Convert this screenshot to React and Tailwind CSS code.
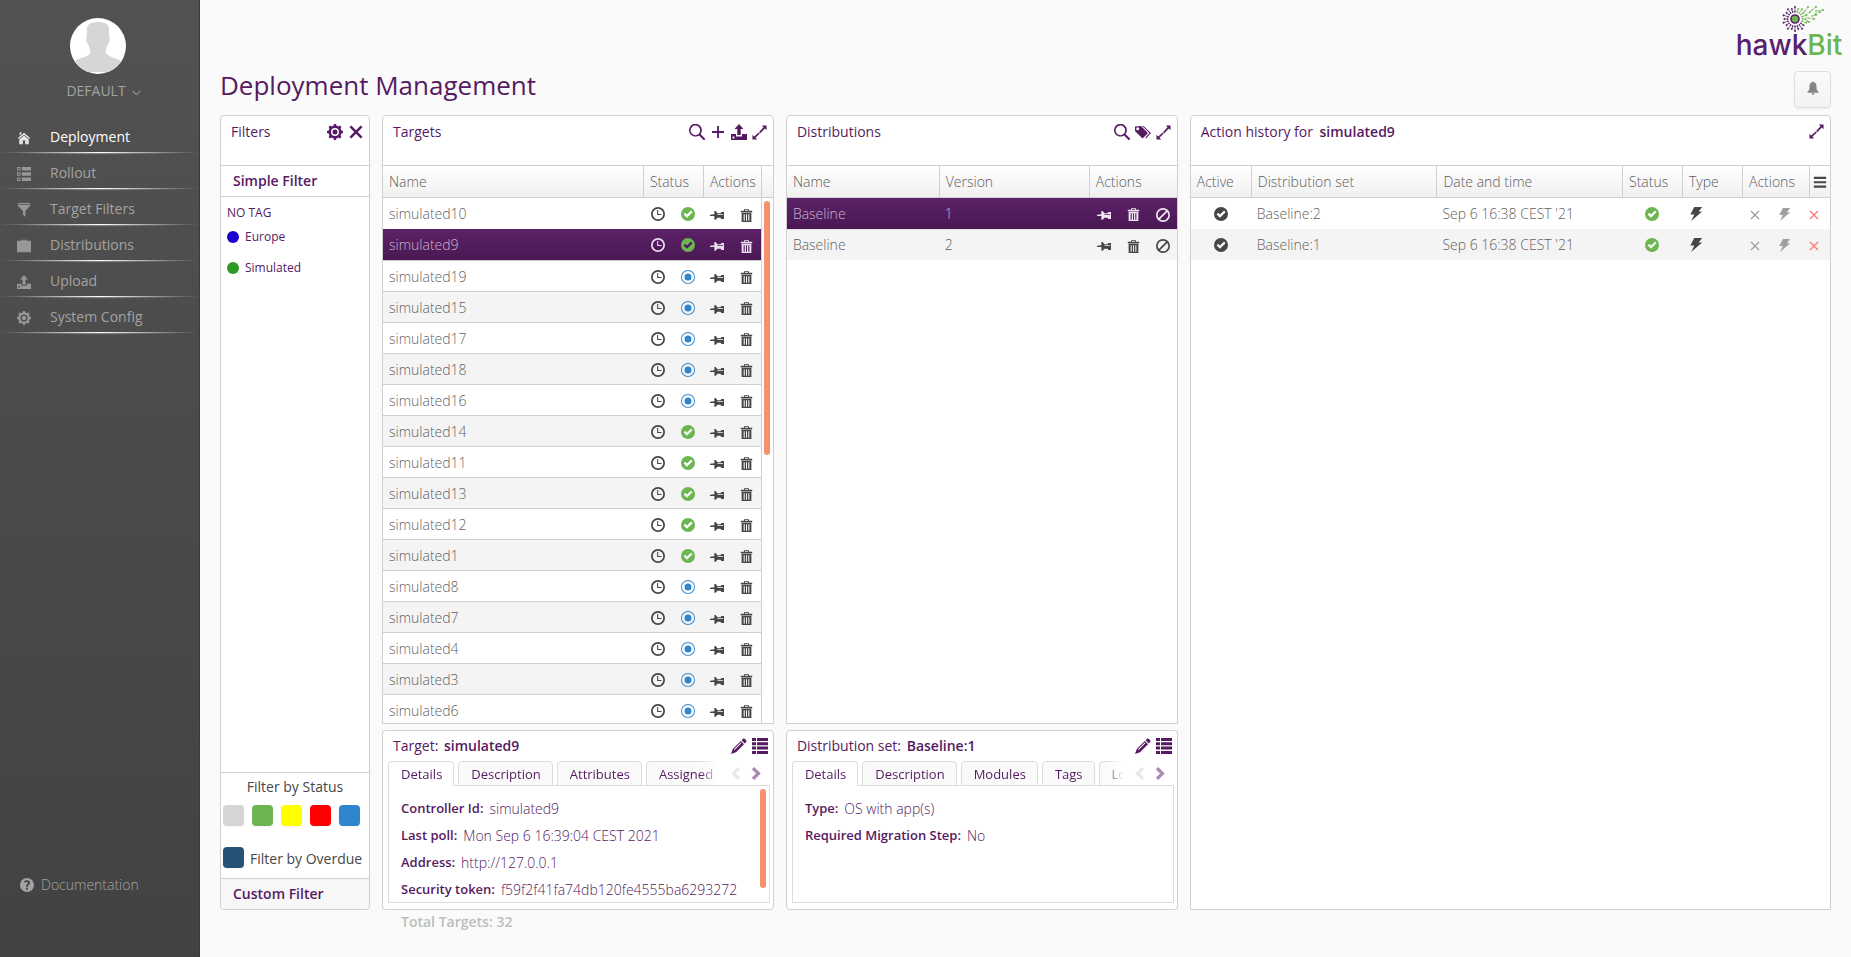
const SHAPES = {
  home: 'M8 2 1 8l1 1.2L8 4.2l6 5L15 8zM2.6 9.6V15h4v-4.2h2.8V15h4V9.6L8 5.2zM3 1.5h2v2L3 5.2z',
  tasks: 'M0 0h4v4H0zM1.2 1.2v1.6h1.6V1.2zM5.5 0H16v4H5.5zM0 6h4v4H0zM1.2 7.2v1.6h1.6V7.2zM5.5 6H16v4H5.5zM0 12h4v4H0zM1.2 13.2v1.6h1.6v-1.6zM5.5 12H16v4H5.5z',
  filter: 'M1 0h14v1.2H1zM1 2h14v1L9.6 9.2V16L6.8 13.2V9.2L1 3z',
  briefcase: 'M5 2V.8h6V2h5v13H0V2zM6 2h4v-.4H6z',
  upload: 'M8 0l4.5 5H9.7v6H6.3V5H3.5zM0 10h5v2.4h6V10h5v6H0zM1.6 12.6v1.8h1.8v-1.8z',
  cog: 'M16 9V7l-1.7-.6c-.2-.6-.4-1.2-.7-1.8l.8-1.6L13 1.6l-1.6.8c-.5-.3-1.1-.6-1.8-.7L9 0H7l-.6 1.7c-.6.2-1.2.4-1.7.7l-1.6-.8-1.5 1.5.8 1.6c-.3.5-.5 1.1-.7 1.7L0 7v2l1.7.6c.2.6.4 1.2.7 1.8L1.6 13 3 14.4l1.6-.8c.5.3 1.1.6 1.8.7L7 16h2l.6-1.7c.6-.2 1.2-.4 1.8-.7l1.6.8 1.4-1.4-.8-1.6c.3-.5.6-1.1.7-1.8zM8 12a4 4 0 1 1 0-8 4 4 0 0 1 0 8zM8 5.5a2.5 2.5 0 1 0 0 5 2.5 2.5 0 0 0 0-5z',
  close: 'M2.6.6 8 6 13.4.6l2 2L10 8l5.4 5.4-2 2L8 10l-5.4 5.4-2-2L6 8 .6 2.6z',
  search: 'M15.7 14.3l-4.2-4.2A6.4 6.4 0 1 0 10 11.5l4.3 4.2c.4.4 1 .4 1.4 0s.4-1 0-1.4zM6.4 11.2a4.8 4.8 0 1 1 0-9.6 4.8 4.8 0 0 1 0 9.6z',
  plus: 'M7.1 2h1.8v5.1H14v1.800H8.900V14H7.100V8.900H2V7.100h5.100z',
  expand: 'M10.500.500H15.500V5.500L13.700 3.800 8.800 8.700 7.600 7.500 12.300 2.400zM7.200 7.900 8.300 9 3.700 13.700 5.500 15.500H.500V10.500L2.300 12.300z',
  tags: 'M0 2.500V7l7.500 7.500 5.500-5.500L6 2zM2.700 6.200a1.500 1.500 0 1 1 0-3 1.500 1.500 0 0 1 0 3zM7.200 2h1.300l7.500 7-5 5.500-.8-.8L14.500 9z',
  clock: 'M8 0a8 8 0 1 0 0 16A8 8 0 0 0 8 0zm0 14A6 6 0 1 1 8 2a6 6 0 0 1 0 12zM7 3.500h1.200V8H12v1.200H7z',
  check: 'M8 0a8 8 0 1 0 0 16A8 8 0 0 0 8 0zM6.800 12.200 3 8.500l1.800-1.800 2 2 4.700-4.600 1.700 1.800z',
  bullseye: 'M8 0a8 8 0 1 0 0 16A8 8 0 0 0 8 0zm0 15A7 7 0 1 1 8 1a7 7 0 0 1 0 14zM8 4a4 4 0 1 0 0 8 4 4 0 0 0 0-8z',
  pin: 'M0 7.600 5 7V3.500h1.500L8.500 6H12l1-1.500h3v8h-3L12 11H8.500l-2 2.500H5V9.200H0zM8.500 7v1H15V7z',
  trash: 'M5 2V.3h6V2h4v2.300H1V2zM6.200 1.300V2h3.600v-.7zM2 5h12v11H2zM4.500 6.500v8h1.300v-8zM7.400 6.500v8h1.200v-8zM10.200 6.500v8h1.300v-8z',
  ban: 'M8 0a8 8 0 1 0 0 16A8 8 0 0 0 8 0zM2 8a6 6 0 0 1 9.500-4.900L3.100 11.500A6 6 0 0 1 2 8zm6 6a6 6 0 0 1-3.500-1.100l8.400-8.400A6 6 0 0 1 8 14z',
  bolt: 'M6 0h9l-4 5.200h4L2.500 16 6 8.600H1.500z',
  cross: 'M3.200 2 8 6.800 12.800 2 14 3.200 9.200 8l4.800 4.800-1.200 1.200L8 9.200 3.200 14 2 12.800 6.800 8 2 3.200z',
  menu: 'M1 2h14v2.500H1zM1 7h14v2.500H1zM1 12h14v2.500H1z',
  bell: 'M7 1.500a1 1 0 0 1 2 0c2 .5 3 2 3 4.500 0 4 .5 5 2.500 6.500v.8h-13v-.8C3.500 11 4 10 4 6c0-2.500 1-4 3-4.500zM6.300 14h3.400c0 1-.7 1.800-1.700 1.800s-1.700-.8-1.700-1.800z',
  pencil: 'M12 .8c1.200-1.200 4.400 2 3.200 3.200l-1.400 1.400-3.200-3.200zM9.800 3 13 6.200 5 14.200 0 16l1.800-5zM9.700 4.600 3 11.300l.6.6 6.700-6.700z',
  list: 'M0 0h4v3H0zM5 0h11v3H5zM0 4.300h4v3H0zM5 4.300h11v3H5zM0 8.600h4v3H0zM5 8.600h11v3H5zM0 13h4v3H0zM5 13h11v3H5z',
  left: 'M10.500 1 13 3.500 8.500 8l4.500 4.500-2.500 2.500-7-7z',
  right: 'M5.500 1 3 3.500 7.500 8 3 12.500 5.500 15l7-7z',
  down: 'M2 4.500 8 10.300l6-5.800 1.500 2L8 13.500.5 6.500z',
  question: 'M8 0a8 8 0 1 0 0 16A8 8 0 0 0 8 0zM6.900 13.300v-2.200h2.200v2.200zM6.900 10V8.300c0-1.200 2.300-1.500 2.300-2.700 0-1.300-2.200-1.400-3.300-.2L4.400 4C6.600 1.700 11.600 2.200 11.600 5.500c0 2.200-2.400 2.500-2.400 3.500v1z',
};

function Icon({ name, className = 'size-4' }) {
  return (
    <svg viewBox="0 0 16 16" fill="currentColor" fillRule="evenodd" aria-hidden="true" className={`shrink-0 ${className}`}>
      <path d={SHAPES[name]} />
    </svg>
  );
}

function IconButton({ name, label, className = '', icon = 'size-4' }) {
  return (
    <button type="button" aria-label={label} className={`flex items-center justify-center ${className}`}>
      <Icon name={name} className={icon} />
    </button>
  );
}

const NAV = [
  ['Deployment', 'home'],
  ['Rollout', 'tasks'],
  ['Target Filters', 'filter'],
  ['Distributions', 'briefcase'],
  ['Upload', 'upload'],
  ['System Config', 'cog'],
];

function Sidebar() {
  return (
    <aside className="flex w-[200px] shrink-0 flex-col border-r border-[#3a3a3a] bg-linear-to-b from-[#525252] to-[#424242] text-[#a3a3a3]">
      <div className="flex flex-col items-center pt-[18px]">
        <svg viewBox="0 0 56 56" className="mr-1 size-14 rounded-full bg-white" aria-hidden="true">
          <path
            fill="#d6d6d6"
            d="M17 14C16 6 21 4 28 4s12 2 11 10l.6 7c0 3-1 5-2.600 7l-1.500 6c1 3 4 4 7 5.500 4 1.500 7 2 8.500 4L44 54H12L4 44c1.500-2.500 5-3 9-4.500 3-1 7-2.500 7.500-5.500L18.500 27C16.600 25 16 23 16.200 20z"
          />
        </svg>
        <button type="button" className="mt-[5px] ml-2 flex h-6 items-center gap-[6px] text-sm">
          DEFAULT
          <Icon name="down" className="mt-[2px] size-[9px] text-[#858585]" />
        </button>
      </div>
      <nav className="mt-4 flex flex-col">
        {NAV.map(([label, icon], i) => (
          <a key={label} href={`#${icon}`} className={`block ${i === 0 ? 'text-white' : ''}`}>
            <span className="flex h-[33px] items-center gap-[19px] pt-[2px] pl-[17px] text-sm">
              <Icon name={icon} className={`mt-[2px] size-[14px] ${i === 0 ? 'text-[#e6e6e6]' : 'text-[#979797]'}`} />
              {label}
            </span>
            <span className="block h-px bg-linear-to-r from-transparent via-white to-transparent" />
            <span className="block h-[2px] bg-radial-[ellipse_at_top] from-white/40 to-transparent to-60%" />
          </a>
        ))}
      </nav>
      <a href="#docs" className="mt-auto mb-[60px] flex h-6 items-center gap-[7px] pl-5 text-sm font-light text-[#a3a3a3]">
        <Icon name="question" className="size-[14px]" />
        Documentation
      </a>
    </aside>
  );
}

const RAYS = Array.from({ length: 20 }, (_, i) => (i * Math.PI) / 10);

function Logo() {
  return (
    <div className="flex w-28 flex-col items-center" role="img" aria-label="hawkBit">
      <svg viewBox="0 0 44 28" className="ml-7 h-7 w-11" aria-hidden="true">
        <g strokeWidth="0.7">
          {RAYS.map((a, i) => {
            const color = a > 4.8 || a < 0.5 ? '#6cb551' : '#59216b';
            const c = Math.cos(a);
            const s = Math.sin(a);
            const r = i % 2 ? 12 : 10.5;
            return (
              <g key={a} stroke={color} fill={color}>
                <line x1={14 + c * 6.5} y1={14 + s * 6.5} x2={14 + c * r} y2={14 + s * r} />
                <circle cx={14 + c * r} cy={14 + s * r} r="0.7" />
                <circle cx={14 + c * 7.5} cy={14 + s * 7.5} r="0.5" />
              </g>
            );
          })}
        </g>
        <circle cx="14" cy="14" r="4" fill="#6cb551" stroke="#59216b" strokeWidth="1.6" />
        <g stroke="#6cb551" fill="#6cb551" strokeWidth="0.6">
          {[[25, 10, 29, 7], [27, 13, 33, 14], [24, 6, 27, 2], [31, 5, 35, 2], [34, 9, 39, 7], [35, 6, 42, 5], [26, 16, 28, 17], [31, 11, 35, 10]].map(([a, b, c, d]) => (
            <g key={`${a}-${b}`}>
              <line x1={a} y1={b} x2={c} y2={d} />
              <circle cx={c} cy={d} r="0.8" />
              <circle cx={a} cy={b} r="0.5" />
            </g>
          ))}
        </g>
      </svg>
      <span className="font-[Inter,sans-serif] text-[28px] leading-6 font-medium text-[#59216b]">
        hawk<span className="text-[#6cb551]">Bit</span>
      </span>
    </div>
  );
}

const PANEL = 'border border-[#d0d0d0] bg-white';
const HEADTEXT = 'text-sm text-[#551a61]';
const TH = 'h-[33px] border-y border-[#d0d0d0] bg-linear-to-b from-white to-[#f0f0f0] px-[6px] text-left text-sm font-light text-[#5c5c5c]';
const SELECTED = 'bg-linear-to-b from-[#5c2167] to-[#4a1854] text-[#c9b5cd]';

const STATUS_TAGS = [
  ['Unknown', 'bg-[#d5d5d5]'],
  ['In sync', 'bg-[#6cb551]'],
  ['Pending', 'bg-[#ffff00]'],
  ['Error', 'bg-[#ff0000]'],
  ['Registered', 'bg-[#2f86cf]'],
];

function Filters() {
  return (
    <section className={`${PANEL} flex flex-col rounded`}>
      <header className="flex h-[49px] items-start justify-between pt-[6px] pr-[6px] pl-[10px]">
        <h2 className={`${HEADTEXT} leading-5`}>Filters</h2>
        <div className="flex gap-[6px] pt-[2px] text-[#551a61]">
          <IconButton name="cog" label="Configure tags" />
          <IconButton name="close" label="Close filters" icon="size-[14px]" />
        </div>
      </header>
      <button type="button" className="h-8 border-y border-[#d0d0d0] bg-white pl-3 text-left text-sm font-semibold text-[#551a61]">
        Simple Filter
      </button>
      <div className="flex flex-1 flex-col items-start pt-[6px] pl-[6px] text-xs text-[#551a61]">
        <button type="button" className="h-5">NO TAG</button>
        <button type="button" className="flex h-7 items-center gap-[6px]">
          <span className="size-3 rounded-full bg-[#1a00d0]" />
          Europe
        </button>
        <button type="button" className="mt-[3px] flex h-7 items-center gap-[6px]">
          <span className="size-3 rounded-full bg-[#2c9a22]" />
          Simulated
        </button>
      </div>
      <div className="h-[106px] border-t border-[#d0d0d0] pl-[2px] text-sm text-[#464646]">
        <div className="flex h-7 items-center justify-center pr-[2px]">Filter by Status</div>
        <div className="mt-1 flex gap-2">
          {STATUS_TAGS.map(([label, color]) => (
            <button key={label} type="button" aria-label={label} className={`size-[21px] rounded-sm shadow-xs ${color}`} />
          ))}
        </div>
        <div className="mt-[19px] flex items-center gap-[6px]">
          <button type="button" aria-label="Overdue" className="size-[21px] rounded-sm bg-[#265278] shadow-xs" />
          <span className="mt-1 leading-5 whitespace-nowrap">Filter by Overdue</span>
        </div>
      </div>
      <button type="button" className="h-[31px] rounded-b border-t border-[#d0d0d0] bg-[#f7f7f7] pl-3 text-left text-sm font-semibold text-[#551a61]">
        Custom Filter
      </button>
    </section>
  );
}

function PanelHeader({ title, children }) {
  return (
    <header className="flex h-[49px] shrink-0 items-start justify-between pt-[6px] pr-[6px] pl-[10px]">
      <h2 className={`${HEADTEXT} leading-5`}>{title}</h2>
      <div className="flex gap-[5px] pt-[2px] text-[#551a61]">{children}</div>
    </header>
  );
}

const TARGETS = [
  ['simulated10', 1], ['simulated9', 1], ['simulated19', 0], ['simulated15', 0], ['simulated17', 0], ['simulated18', 0],
  ['simulated16', 0], ['simulated14', 1], ['simulated11', 1], ['simulated13', 1], ['simulated12', 1], ['simulated1', 1],
  ['simulated8', 0], ['simulated7', 0], ['simulated4', 0], ['simulated3', 0], ['simulated6', 0],
];

function Targets() {
  return (
    <section className={`${PANEL} flex min-h-0 flex-1 flex-col rounded-t`}>
      <PanelHeader title="Targets">
        <IconButton name="search" label="Search" />
        <IconButton name="plus" label="Add target" />
        <IconButton name="upload" label="Bulk upload" />
        <IconButton name="expand" label="Maximize" icon="size-[15px]" />
      </PanelHeader>
      <div className="relative min-h-0 flex-1 overflow-hidden">
        <table className="w-full table-fixed border-separate border-spacing-0">
          <thead>
            <tr>
              <th className={TH}>Name</th>
              <th className={`${TH} w-[60px] border-l`}>Status</th>
              <th className={`${TH} w-[58px] border-l`}>Actions</th>
              <th className={`${TH} w-3 border-l px-0!`} aria-label="Scroll" />
            </tr>
          </thead>
          <tbody>
            {TARGETS.map(([name, done], i) => {
              const sel = i === 1;
              const line = i > 1 ? 'border-t border-[#d0d0d0]' : '';
              return (
                <tr key={name} className="text-sm font-light text-[#5f5f5f]">
                  <td colSpan={3} className={`h-[31px] p-0 ${line} ${sel ? SELECTED : i % 2 ? 'bg-[#f4f4f4]' : 'bg-white'}`}>
                    <div className="flex h-[30px] items-center pt-px pl-[6px]">
                      <span className="flex-1">{name}</span>
                      <span className={`flex items-center ${sel ? 'text-[#e9dcec]' : 'text-[#464646]'}`}>
                        <Icon name="clock" className="mr-4 size-[14px]" />
                        <Icon name={done ? 'check' : 'bullseye'} className={`mr-[15px] size-[14px] ${done ? 'text-[#6cb551]' : 'text-[#2f86cf]'}`} />
                        <IconButton name="pin" label={`Pin ${name}`} className="mt-[2px] mr-4" icon="size-[14px]" />
                        <IconButton name="trash" label={`Delete ${name}`} className="mt-[2px] mr-2" icon="size-[13px]" />
                      </span>
                    </div>
                  </td>
                  <td className="border-l border-[#d0d0d0] p-0" />
                </tr>
              );
            })}
          </tbody>
        </table>
        <div className="absolute top-9 right-[3px] h-[254px] w-[6px] rounded-full bg-[#f5916c]" />
      </div>
    </section>
  );
}

function Distributions() {
  return (
    <section className={`${PANEL} flex min-h-0 flex-1 flex-col rounded-t`}>
      <PanelHeader title="Distributions">
        <IconButton name="search" label="Search" />
        <IconButton name="tags" label="Tags" />
        <IconButton name="expand" label="Maximize" icon="size-[15px]" />
      </PanelHeader>
      <table className="w-full table-fixed border-separate border-spacing-0">
        <thead>
          <tr>
            <th className={TH}>Name</th>
            <th className={`${TH} w-[150px] border-l`}>Version</th>
            <th className={`${TH} w-[88px] border-l`}>Actions</th>
          </tr>
        </thead>
        <tbody>
          {['1', '2'].map((version, i) => {
            const cell = `h-[31px] p-0 ${i ? 'border-t border-[#e4e4e4]' : ''}`;
            return (
              <tr key={version} className={`text-sm font-light ${i ? 'bg-[#f4f4f4] text-[#5f5f5f]' : SELECTED}`}>
                <td className={`${cell} pl-[6px]`}>Baseline</td>
                <td className={`${cell} pl-[6px]`}>{version}</td>
                <td className={cell}>
                  <div className={`flex items-center pt-[2px] pl-2 ${i ? 'text-[#464646]' : 'text-[#f0e6f2]'}`}>
                    <IconButton name="pin" label="Pin" className="mr-4" icon="size-[14px]" />
                    <IconButton name="trash" label="Delete" className="mr-4" icon="size-[13px]" />
                    <IconButton name="ban" label="Invalidate" icon="size-[14px]" />
                  </div>
                </td>
              </tr>
            );
          })}
        </tbody>
      </table>
    </section>
  );
}

function Details({ kind, name, tabs, rows, scroll }) {
  return (
    <section className={`${PANEL} flex h-[180px] shrink-0 flex-col rounded pr-[3px] pb-[6px] pl-[5px]`}>
      <header className="flex h-[30px] shrink-0 items-center justify-between pr-[2px] pl-[5px]">
        <h2 className={HEADTEXT}>
          {kind}: <strong className="ml-[2px] font-semibold">{name}</strong>
        </h2>
        <div className="flex gap-[5px] text-[#551a61]">
          <IconButton name="pencil" label="Edit" />
          <IconButton name="list" label="Metadata" />
        </div>
      </header>
      <div className="relative z-10 -mb-px flex h-[25px] shrink-0 items-stretch">
        <div role="tablist" className="flex min-w-0 flex-1 gap-1 overflow-hidden mask-r-from-[calc(100%-20px)] text-[13px] text-[#551a61]">
          {tabs.map((tab, i) => (
            <button
              key={tab}
              type="button"
              role="tab"
              aria-selected={i === 0}
              className={`shrink-0 rounded-t border border-[#dcdcdc] pr-[11px] pl-3 leading-5 ${i === 0 ? 'border-b-white bg-white' : 'bg-[#fafafa]'}`}
            >
              {tab}
            </button>
          ))}
        </div>
        <div className="flex w-[50px] items-center gap-[6px] pl-2 text-[#551a61]">
          <IconButton name="left" label="Previous tabs" className="opacity-10" icon="size-[15px]" />
          <IconButton name="right" label="Next tabs" className="opacity-50" icon="size-[15px]" />
        </div>
      </div>
      <div className="relative min-h-0 flex-1 overflow-hidden border border-[#dcdcdc] pt-[9px] pl-3 text-[#551a61]">
        {rows.map(([key, value]) => (
          <div key={key} className="flex h-[27px] items-center gap-[6px] whitespace-nowrap">
            <span className="text-[13px] font-semibold">{key}:</span>
            <span className="text-sm font-light">{value}</span>
          </div>
        ))}
        {scroll && <div className="absolute top-[3px] right-[3px] h-[99px] w-[6px] rounded-full bg-[#f5916c]" />}
      </div>
    </section>
  );
}

function History() {
  return (
    <section className={`${PANEL} flex min-w-0 flex-col rounded-t`}>
      <PanelHeader title={<>Action history for <strong className="ml-[3px] font-semibold">simulated9</strong></>}>
        <IconButton name="expand" label="Maximize" icon="size-[15px]" />
      </PanelHeader>
      <table className="w-full table-fixed border-separate border-spacing-0">
        <thead>
          <tr>
            <th className={`${TH} w-[60px]`}>Active</th>
            <th className={`${TH} border-l`}>Distribution set</th>
            <th className={`${TH} border-l`}>Date and time</th>
            <th className={`${TH} w-[60px] border-l`}>Status</th>
            <th className={`${TH} w-[60px] border-l`}>Type</th>
            <th className={`${TH} w-[67px] border-l`}>Actions</th>
            <th className={`${TH} w-[21px] border-l px-[3px]!`}>
              <IconButton name="menu" label="Columns" className="text-[#464646]" icon="size-[14px]" />
            </th>
          </tr>
        </thead>
        <tbody>
          {['Baseline:2', 'Baseline:1'].map((set, i) => (
            <tr key={set} className={`text-sm font-light text-[#5f5f5f] ${i ? 'bg-[#f4f4f4]' : ''}`}>
              <td className="h-[31px] p-0"><Icon name="check" className="mx-auto size-[14px] text-[#464646]" /></td>
              <td className="p-0 pl-[6px]">{set}</td>
              <td className="p-0 pl-[6px]">Sep 6 16:38 CEST '21</td>
              <td className="p-0"><Icon name="check" className="mx-auto size-[14px] text-[#6cb551]" /></td>
              <td className="p-0"><Icon name="bolt" className="ml-[7px] size-[14px] text-[#464646]" /></td>
              <td colSpan={2} className="p-0">
                <div className="flex items-center pt-[2px] pl-[7px] text-[#a0a0a0]">
                  <IconButton name="cross" label="Cancel" className="mr-[17px]" icon="size-3" />
                  <IconButton name="bolt" label="Force" className="mr-[17px]" icon="size-[13px]" />
                  <IconButton name="cross" label="Force quit" className="text-[#f87c7c]" icon="size-3" />
                </div>
              </td>
            </tr>
          ))}
        </tbody>
      </table>
    </section>
  );
}

export default function App() {
  return (
    <div className="flex h-screen bg-[#fafafa] font-['Open_Sans','Noto_Sans',sans-serif] text-sm">
      <Sidebar />
      <main className="relative flex min-w-0 flex-1 flex-col px-5">
        <div className="absolute top-[5px] right-[6px]">
          <Logo />
        </div>
        <div className="flex h-[115px] shrink-0 items-end justify-between">
          <h1 className="mb-3 text-[26px] leading-9 text-[#551a61]">Deployment Management</h1>
          <button type="button" aria-label="Notifications" className="mb-[7px] flex size-[37px] items-center justify-center rounded border border-[#dedede] bg-linear-to-b from-[#fafafa] to-[#f3f3f3] pb-1 text-[#858585] shadow-xs">
            <Icon name="bell" className="size-[14px]" />
          </button>
        </div>
        <div className="grid min-h-0 flex-1 grid-cols-[150px_minmax(0,11fr)_minmax(0,11fr)_minmax(0,18fr)] grid-rows-[minmax(0,1fr)] gap-3">
          <Filters />
          <div className="flex min-h-0 flex-col gap-[6px]">
            <Targets />
            <Details
              kind="Target"
              name="simulated9"
              tabs={['Details', 'Description', 'Attributes', 'Assigned']}
              rows={[
                ['Controller Id', 'simulated9'],
                ['Last poll', 'Mon Sep 6 16:39:04 CEST 2021'],
                ['Address', 'http://127.0.0.1'],
                ['Security token', 'f59f2f41fa74db120fe4555ba6293272'],
              ]}
              scroll
            />
          </div>
          <div className="flex min-h-0 flex-col gap-[6px]">
            <Distributions />
            <Details
              kind="Distribution set"
              name="Baseline:1"
              tabs={['Details', 'Description', 'Modules', 'Tags', 'Logs']}
              rows={[
                ['Type', 'OS with app(s)'],
                ['Required Migration Step', 'No'],
              ]}
            />
          </div>
          <History />
        </div>
        <footer className="h-[47px] shrink-0 pl-[181px] text-sm leading-6 font-semibold text-[#bdbdbd]">Total Targets: 32</footer>
      </main>
    </div>
  );
}
